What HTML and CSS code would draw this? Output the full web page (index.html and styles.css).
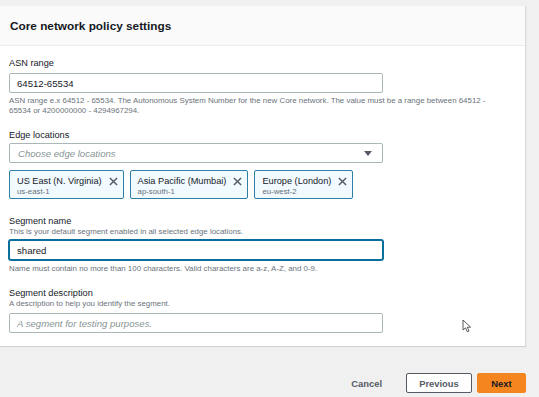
FILE: index.html
```html
<!DOCTYPE html>
<html lang="en">
<head>
    <meta charset="UTF-8">
    <title>Core network policy settings</title>
    <link rel="stylesheet" href="styles.css">
</head>
<body>

<div class="card">
    <div class="card-header">
        <h2>Core network policy settings</h2>
    </div>

    <div class="card-body">
        <div class="field field-asn">
            <label class="field-label" for="asnRange">ASN range</label>
            <input class="text-input" type="text" id="asnRange" value="64512-65534">
            <p class="hint hint-after">ASN range e.x 64512 - 65534. The Autonomous System Number for the new Core network. The value must be a range between 64512 - 65534 or 4200000000 - 4294967294.</p>
        </div>

        <div class="field field-edge">
            <label class="field-label">Edge locations</label>
            <div class="select">
                <span class="placeholder">Choose edge locations</span>
                <span class="caret"></span>
            </div>
            <div class="tokens">
                <div class="token">
                    <div class="token-text">
                        <span class="token-title">US East (N. Virginia)</span>
                        <span class="token-sub">us-east-1</span>
                    </div>
                    <svg class="token-x" viewBox="0 0 10 10"><path d="M1 1 L9 9 M9 1 L1 9"/></svg>
                </div>
                <div class="token">
                    <div class="token-text">
                        <span class="token-title">Asia Pacific (Mumbai)</span>
                        <span class="token-sub">ap-south-1</span>
                    </div>
                    <svg class="token-x" viewBox="0 0 10 10"><path d="M1 1 L9 9 M9 1 L1 9"/></svg>
                </div>
                <div class="token">
                    <div class="token-text">
                        <span class="token-title">Europe (London)</span>
                        <span class="token-sub">eu-west-2</span>
                    </div>
                    <svg class="token-x" viewBox="0 0 10 10"><path d="M1 1 L9 9 M9 1 L1 9"/></svg>
                </div>
            </div>
        </div>

        <div class="field field-segment">
            <label class="field-label" for="segmentName">Segment name</label>
            <p class="hint">This is your default segment enabled in all selected edge locations.</p>
            <input class="text-input focused" type="text" id="segmentName" value="shared">
            <p class="hint hint-after">Name must contain no more than 100 characters. Valid characters are a-z, A-Z, and 0-9.</p>
        </div>

        <div class="field field-desc">
            <label class="field-label" for="segmentDesc">Segment description</label>
            <p class="hint">A description to help you identify the segment.</p>
            <input class="text-input" type="text" id="segmentDesc" placeholder="A segment for testing purposes.">
        </div>
    </div>
</div>

<div class="actions">
    <button class="btn btn-link">Cancel</button>
    <button class="btn btn-normal">Previous</button>
    <button class="btn btn-primary">Next</button>
</div>

<!-- mouse pointer from the screen capture -->
<svg class="pointer" viewBox="0 0 10 14">
    <path d="M1 1 L1 11 L3.5 8.8 L5.3 12.8 L7 12 L5.3 8.2 L8.6 8.2 Z"/>
</svg>

</body>
</html>
```

FILE: styles.css
```css
body {
    margin: 0;
    background-color: #f0f0f0;
    font-family: "Liberation Sans", Arial, sans-serif;
    color: #16191f;
    position: relative;
    height: 397px;
    overflow: hidden;
}
.card {
    width: 525px;
    margin-top: 6px;
    background: #fff;
    border-right: 1px solid #d5dbdb;
    box-shadow: 0 1px 1px rgba(0,0,0,0.12);
}
.card-header {
    height: 39px;
    padding: 0 10px;
    display: flex;
    align-items: center;
    background-color: #fafafa;
    border-bottom: 1px solid #eaeded;
}
.card-header h2 {
    margin: 0;
    font-size: 11.8px;
    font-weight: bold;
    color: #16191f;
}
.card-body {
    padding: 11px 9px 13px 9px;
}
.field {
    display: flex;
    flex-direction: column;
    margin-bottom: 15px;
}
.field-label {
    font-size: 9.2px;
    line-height: 12px;
    margin-bottom: 4px;
    color: #16191f;
}
.text-input {
    width: 374px;
    height: 20px;
    box-sizing: border-box;
    border: 1px solid #aab7b8;
    border-radius: 2px;
    padding: 0 7px;
    font-family: inherit;
    font-size: 9.6px;
    color: #16191f;
    outline: none;
}
.text-input::placeholder {
    color: #879596;
    font-style: italic;
}
.text-input.focused {
    border: 1px solid #0a6f9c;
    box-shadow: 0 0 0 1px #0a6f9c;
}
.hint {
    margin: 0;
    font-size: 7.9px;
    line-height: 9.5px;
    color: #6b737b;
    width: 500px;
}
.hint-after {
    margin-top: 3px;
}
.field-asn {
    margin-bottom: 14px;
}
.field-edge {
    margin-bottom: 16px;
}
.field-edge .field-label {
    margin-bottom: 2px;
}
.select {
    width: 374px;
    height: 20px;
    box-sizing: border-box;
    border: 1px solid #aab7b8;
    border-radius: 2px;
    padding: 0 8px;
    display: flex;
    align-items: center;
    justify-content: space-between;
}
.placeholder {
    font-size: 9.6px;
    font-style: italic;
    color: #879596;
}
.caret {
    width: 0;
    height: 0;
    border-left: 4px solid transparent;
    border-right: 4px solid transparent;
    border-top: 5px solid #545b64;
    margin-right: 2px;
}
.tokens {
    display: flex;
    gap: 6px;
    margin-top: 7px;
}
.token {
    display: flex;
    align-items: flex-start;
    gap: 7px;
    height: 29px;
    box-sizing: border-box;
    padding: 4px 5px 0 7px;
    background-color: #f1faff;
    border: 1px solid #2e7fa8;
    border-radius: 2px;
}
.token-text {
    display: flex;
    flex-direction: column;
}
.token-title {
    font-size: 9.2px;
    line-height: 12px;
    color: #16191f;
}
.token-sub {
    font-size: 7.8px;
    line-height: 9px;
    color: #687078;
}
.token-x {
    width: 9px;
    height: 9px;
    margin-top: 2px;
    stroke: #545b64;
    stroke-width: 1.6;
    fill: none;
}
.field-segment {
    margin-bottom: 13px;
}
.field-segment .field-label,
.field-desc .field-label {
    margin-bottom: 0;
}
.field-segment .hint,
.field-desc .hint {
    line-height: 10px;
    margin-bottom: 3px;
}
.field-segment .hint-after {
    margin-top: 4px;
    margin-bottom: 0;
}
.field-desc {
    margin-bottom: 0;
}
.field-desc .hint {
    margin-bottom: 4px;
}
.actions {
    width: 526px;
    margin-top: 27px;
    display: flex;
    justify-content: flex-end;
    align-items: center;
    gap: 5px;
}
.btn {
    height: 20px;
    box-sizing: border-box;
    font-family: inherit;
    font-size: 9.4px;
    font-weight: bold;
    border-radius: 2px;
    padding: 0 10px;
    cursor: pointer;
}
.btn-link {
    background: none;
    border: none;
    color: #545b64;
    margin-right: 9px;
}
.btn-normal {
    width: 66px;
    background: #fff;
    border: 1px solid #545b64;
    color: #545b64;
}
.btn-primary {
    width: 49px;
    background: #f5861f;
    border: 1px solid #f5861f;
    color: #16191f;
}
.pointer {
    position: absolute;
    left: 462px;
    top: 319px;
    width: 10px;
    height: 14px;
    fill: #fff;
    stroke: #333;
    stroke-width: 0.8;
}
```
